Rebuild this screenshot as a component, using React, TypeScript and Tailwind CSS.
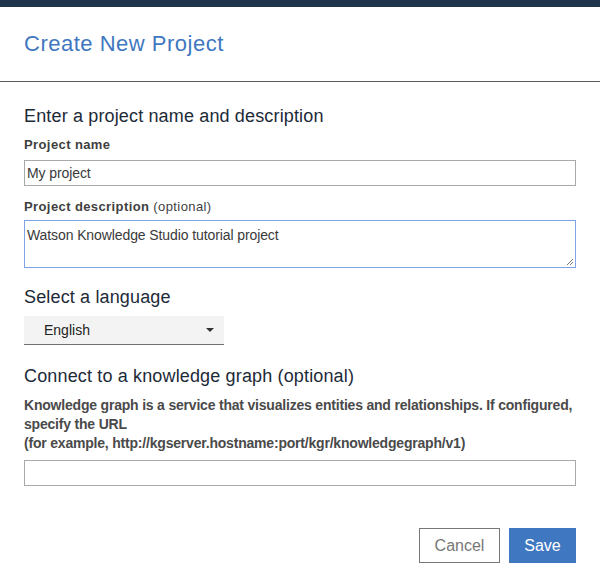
import React from "react";

export default function App() {
  return (
    <div className="w-[600px] h-[588px] bg-white flex flex-col" style={{ fontFamily: '"Liberation Sans", Arial, sans-serif' }}>
      <div className="h-[7px] bg-[#1f354c]" />
      <div className="h-[75px] flex items-center px-6 border-b border-[#5a5a5a]">
        <h1 className="text-[22px] tracking-[0.5px] text-[#3f78c0] leading-none">Create New Project</h1>
      </div>
      <div className="px-6 flex flex-col">
        <h2 className="text-[18px] tracking-[0.15px] text-[#1d2a38] leading-none mt-[25px]">Enter a project name and description</h2>
        <label className="text-[13px] font-bold tracking-[0.4px] text-[#3f3f3f] leading-none mt-[13px]">Project name</label>
        <div className="mt-[9px] h-[26px] border border-[#a9a9a9] flex items-center px-[2px] text-[14px] tracking-[-0.1px] text-[#3a3a3a]">My project</div>
        <div className="text-[13px] tracking-[0.4px] text-[#3f3f3f] leading-none mt-[14px]">
          <span className="font-bold">Project description</span> (optional)
        </div>
        <div className="relative mt-[7px] h-[48px] border border-[#7ea3e6] px-[2px] pt-[7px] text-[14px] tracking-[-0.1px] text-[#3a3a3a] leading-none">
          Watson Knowledge Studio tutorial project
          <svg className="absolute right-[1px] bottom-[1px]" width="9" height="9" viewBox="0 0 9 9">
            <path d="M8 2 L2 8 M8 5 L5 8" stroke="#777" strokeWidth="1" />
          </svg>
        </div>
        <h2 className="text-[18px] tracking-[0.15px] text-[#1d2a38] leading-none mt-[20px]">Select a language</h2>
        <div className="mt-[10px] w-[200px] h-[29px] bg-[#f3f3f3] border-b border-[#6f6f6f] flex items-center justify-between pl-[20px] pr-[10px] text-[14px] text-[#222]">
          <span>English</span>
          <svg width="8" height="4" viewBox="0 0 8 4"><path d="M0 0 L8 0 L4 4 Z" fill="#333" /></svg>
        </div>
        <h2 className="text-[18px] tracking-[0.15px] text-[#1d2a38] leading-none mt-[22px]">Connect to a knowledge graph (optional)</h2>
        <p className="text-[14px] font-bold text-[#4a4a4a] leading-[19px] mt-[11px] tracking-[-0.2px]">
          Knowledge graph is a service that visualizes entities and relationships. If configured, specify the URL
          <br />
          (for example, http://kgserver.hostname:port/kgr/knowledgegraph/v1)
        </p>
        <div className="mt-[7px] h-[26px] border border-[#a9a9a9]" />
        <div className="flex justify-end gap-[9px] mt-[42px]">
          <button className="w-[81px] h-[35px] border border-[#777] text-[16px] text-[#777] bg-white">Cancel</button>
          <button className="w-[67px] h-[35px] bg-[#3f78c0] text-[16px] text-white">Save</button>
        </div>
      </div>
    </div>
  );
}
